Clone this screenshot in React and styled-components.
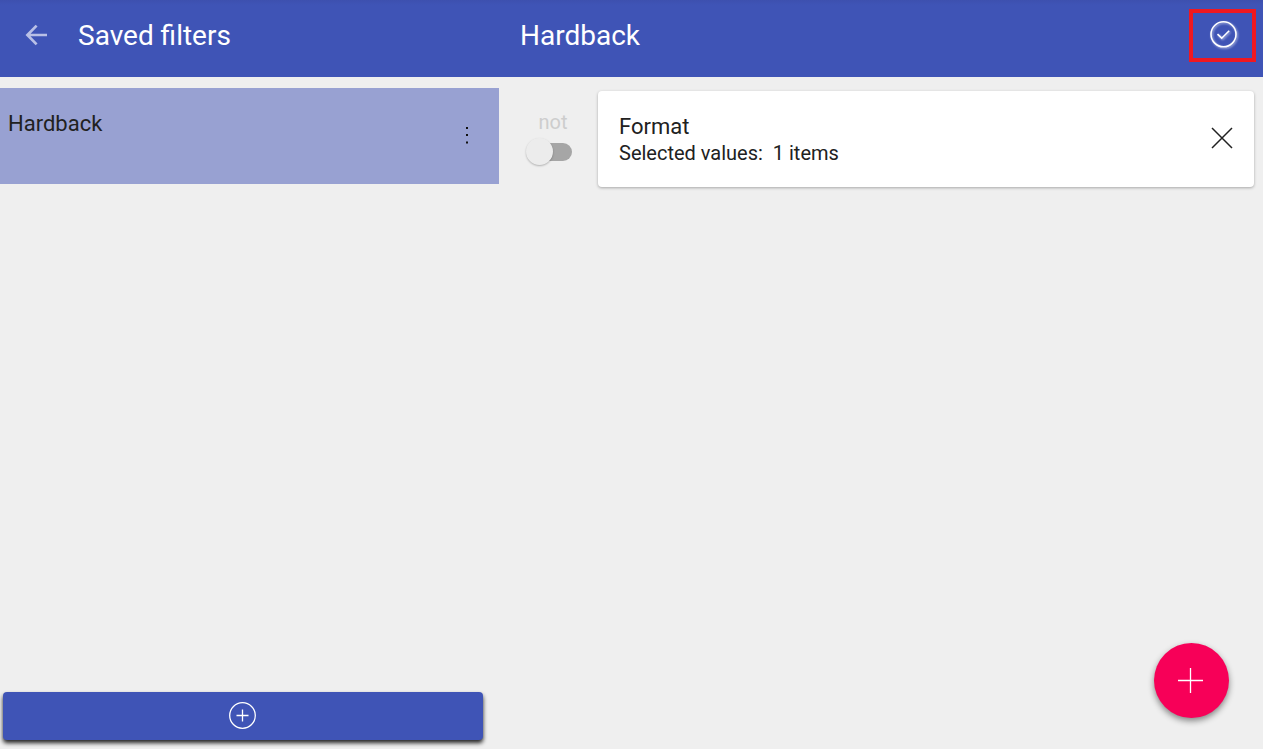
import React, { useState } from "react";
import styled, { createGlobalStyle } from "styled-components";

const GlobalStyle = createGlobalStyle`
  *, *::before, *::after { box-sizing: border-box; }
  body {
    margin: 0;
    background: #efefef;
    color: #212121;
    font-family: Roboto, "Liberation Sans", sans-serif;
  }
  h1, h2, h3, p, ul { margin: 0; padding: 0; font-weight: 400; }
`;

const Page = styled.div`
  display: grid;
  grid-template-columns: minmax(0, 499fr) minmax(0, 764fr);
  grid-template-rows: auto 1fr;
  min-height: 100vh;
`;

const Toolbar = styled.header`
  display: flex;
  align-items: flex-start;
  height: 77px;
  padding: ${(p) => (p.$main ? "9px 7px 0 21px" : "9px 7px 0 12px")};
  background: linear-gradient(#3d50af, #3f54b6 5px);
  color: #fff;
`;

const Title = styled.h1`
  flex: 1;
  font-size: 28px;
  line-height: 54px;
`;

const IconButton = styled.button`
  display: flex;
  align-items: center;
  justify-content: center;
  flex: none;
  width: 48px;
  height: 50px;
  padding: 0;
  border: 0;
  background: none;
  color: inherit;
  cursor: pointer;
`;

const BackButton = styled(IconButton)`
  height: 52px;
  margin-right: 18px;
  color: #b9c0e6;
`;

const ApplyButton = styled(IconButton)`
  width: 67px;
  height: 53px;
  border: 4px solid #f01820;
  svg { filter: drop-shadow(1px 1px 1px rgba(255, 255, 255, 0.6)); }
`;

const Sidebar = styled.aside`
  display: flex;
  flex-direction: column;
  justify-content: space-between;
  padding: 11px 0 9px;
`;

const FilterList = styled.ul`
  list-style: none;
`;

const FilterItem = styled.li`
  display: flex;
  justify-content: space-between;
  height: 96px;
  padding: 22px 8px 0;
  background: #98a1d2;
`;

const ItemName = styled.h3`
  font-size: 22px;
  line-height: 28px;
`;

const AddBar = styled.button`
  display: flex;
  align-items: center;
  justify-content: center;
  height: 48px;
  margin: 0 16px 0 3px;
  padding: 0;
  border: 0;
  border-radius: 4px;
  background: #3f54b6;
  color: #fff;
  box-shadow: 0 3px 4px rgba(0, 0, 0, 0.85);
  cursor: pointer;
`;

const Main = styled.main`
  padding: 14px 9px 0 0;
`;

const Condition = styled.section`
  display: flex;
  align-items: flex-start;
`;

const NotToggle = styled.label`
  display: flex;
  flex-direction: column;
  align-items: center;
  width: 99px;
  padding: 18px 0 0 1px;
  color: #cdcdcd;
  font-size: 20px;
  line-height: 26px;
`;

const NotText = styled.span`
  padding-left: 8px;
`;

const Switch = styled.input`
  appearance: none;
  position: relative;
  display: flex;
  align-items: center;
  width: 47px;
  height: 27px;
  margin: 3px 0 0;
  cursor: pointer;

  &::before {
    content: "";
    width: 40px;
    height: 18px;
    margin-left: 6px;
    border-radius: 9px;
    background: ${(p) => (p.checked ? "#98a1d2" : "#a6a6a6")};
  }

  &::after {
    content: "";
    position: absolute;
    top: 0;
    left: ${(p) => (p.checked ? "20px" : "0")};
    width: 27px;
    height: 27px;
    border-radius: 50%;
    background: #ececec;
    box-shadow: 0 1px 2px rgba(0, 0, 0, 0.25);
  }
`;

const Card = styled.article`
  display: flex;
  align-items: flex-start;
  justify-content: space-between;
  flex: 1;
  min-width: 0;
  height: 96px;
  padding: 22px 8px 0 21px;
  border-radius: 4px;
  background: #fff;
  box-shadow: 0 1px 3px rgba(0, 0, 0, 0.3);
`;

const CardDetail = styled.p`
  font-size: 20px;
  line-height: 24px;
  white-space: pre-wrap;
`;

const Fab = styled.button`
  position: fixed;
  right: 34px;
  bottom: 31px;
  display: flex;
  align-items: center;
  justify-content: center;
  width: 75px;
  height: 75px;
  padding: 0;
  border: 0;
  border-radius: 50%;
  background: #f70058;
  color: #fff;
  box-shadow: 0 3px 6px rgba(0, 0, 0, 0.45);
  cursor: pointer;
`;

const Svg = ({ size, stroke, children }) => (
  <svg
    width={size}
    height={size}
    viewBox={`0 0 ${size} ${size}`}
    fill="none"
    stroke="currentColor"
    strokeWidth={stroke}
    aria-hidden="true"
  >
    {children}
  </svg>
);

export default function App() {
  const [negated, setNegated] = useState(false);

  return (
    <>
      <GlobalStyle />
      <Page>
        <Toolbar>
          <BackButton aria-label="Back">
            <Svg size={24} stroke={2.7}>
              <path d="M23 12H4M12.6 2.6 3.4 12l9.2 9.4" />
            </Svg>
          </BackButton>
          <Title>Saved filters</Title>
        </Toolbar>
        <Toolbar $main>
          <Title as="h2">Hardback</Title>
          <ApplyButton aria-label="Apply filter">
            <Svg size={30} stroke={1.6}>
              <circle cx="15.5" cy="13.3" r="12.5" />
              <path d="m9.5 13.2 4.2 4 7.5-7.5" />
            </Svg>
          </ApplyButton>
        </Toolbar>

        <Sidebar>
          <FilterList>
            <FilterItem>
              <ItemName>Hardback</ItemName>
              <IconButton aria-label="More options">
                <Svg size={20} stroke={0}>
                  <path
                    d="M9 2h2v2H9zM9 9h2v2H9zM9 16.5h2v2H9z"
                    fill="#111"
                  />
                </Svg>
              </IconButton>
            </FilterItem>
          </FilterList>
          <AddBar aria-label="Add saved filter">
            <Svg size={28} stroke={1.3}>
              <circle cx="13.5" cy="13.5" r="12.8" />
              <path d="M13.5 7.5v12M7.5 13.5h12" />
            </Svg>
          </AddBar>
        </Sidebar>

        <Main>
          <Condition>
            <NotToggle>
              <NotText>not</NotText>
              <Switch
                type="checkbox"
                role="switch"
                checked={negated}
                onChange={(e) => setNegated(e.target.checked)}
              />
            </NotToggle>
            <Card>
              <div>
                <ItemName>Format</ItemName>
                <CardDetail>{"Selected values:  1 items"}</CardDetail>
              </div>
              <IconButton aria-label="Remove condition">
                <Svg size={22} stroke={1.5}>
                  <path d="m1 1 20 20M21 1 1 21" />
                </Svg>
              </IconButton>
            </Card>
          </Condition>
        </Main>
      </Page>
      <Fab aria-label="Add condition">
        <Svg size={27} stroke={1.3}>
          <path d="M12.5 1v25M0 13.5h25" />
        </Svg>
      </Fab>
    </>
  );
}
